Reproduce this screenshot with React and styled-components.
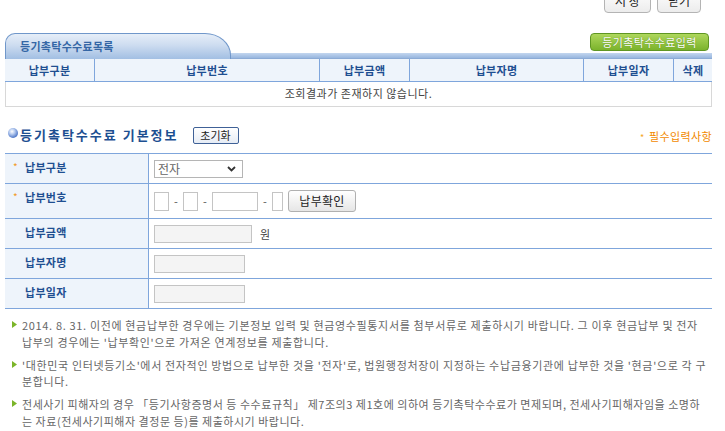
import React from "react";
import styled, { createGlobalStyle } from "styled-components";

const Global = createGlobalStyle`
  html, body { margin: 0; padding: 0; background: #fff; }
  body {
    font-family: "Noto Sans CJK KR", "Noto Sans", sans-serif;
    font-size: 11px;
    color: #333;
    overflow: hidden;
  }
  * { box-sizing: border-box; }
`;

const FONT = `"Noto Sans CJK KR", "Noto Sans", sans-serif`;
const BLUE_LINE = "#7fa6dc";
const LABEL_BLUE = "#1f4f91";
const HEAD_BG = "#eef4fb";

const Page = styled.div`
  width: 725px;
  padding: 0 13px 0 5px;
`;

const TopBar = styled.div`
  display: flex;
  justify-content: flex-end;
  gap: 6px;
  margin-top: -11px;
  padding-right: 11px;
`;

const TopButton = styled.button`
  width: ${(p) => p.$w}px;
  height: 24px;
  padding: 0;
  border: 1px solid #b4b4b4;
  border-radius: 4px;
  background: linear-gradient(#ffffff, #ececec);
  font: 12px/22px ${FONT};
  color: #222;
`;

const ListHead = styled.div`
  margin-top: 20px;
  height: 26px;
  display: flex;
  justify-content: space-between;
  align-items: flex-start;
  background:
    linear-gradient(#8cabd6, #8cabd6) left bottom / 100% 1px no-repeat,
    linear-gradient(#c3d6ef, #8fb0db) left bottom / 100% 6px no-repeat;
`;

const Tab = styled.div`
  width: 226px;
  height: 26px;
  padding-left: 14px;
  border: 1px solid #7097ca;
  border-bottom: none;
  border-radius: 10px 26px 0 0 / 10px 22px 0 0;
  background: linear-gradient(#e6eef8, #cddcf0 45%, #a2bfe3);
  font: bold 11px/25px ${FONT};
  letter-spacing: 0.3px;
  color: #3466a5;
`;

const GreenButton = styled.button`
  width: 119px;
  height: 18px;
  margin-right: 3px;
  padding: 0;
  border: 1px solid #5f9623;
  border-radius: 4px;
  background: linear-gradient(#aed75c, #7bb32c);
  color: #fff;
  font: 11px/16px ${FONT};
  letter-spacing: 0.4px;
  text-shadow: 0 0 1px #4d7d16;
`;

const HeadRow = styled.div`
  display: grid;
  grid-template-columns: 90px 225px 90px 174px 90px 1fr;
  background: ${HEAD_BG};
  border-bottom: 1px solid ${BLUE_LINE};
`;

const HeadCell = styled.div`
  height: 22px;
  line-height: 22px;
  text-align: center;
  font-weight: bold;
  font-size: 11px;
  letter-spacing: 0.3px;
  color: ${LABEL_BLUE};
  border-right: ${(p) => (p.$last ? "none" : `1px solid ${BLUE_LINE}`)};
`;

const EmptyRow = styled.div`
  height: 25px;
  line-height: 23px;
  text-align: center;
  color: #444;
  letter-spacing: 0.5px;
  border: 1px solid #d8d8d8;
  border-top: none;
`;

const SectionHead = styled.div`
  margin-top: 17px;
  height: 22px;
  display: flex;
  align-items: center;
`;

const Marker = styled.span`
  width: 10px;
  height: 10px;
  margin: -4px 0 0 3px;
  border-radius: 50%;
  background: radial-gradient(circle at 40% 35%, #ffffff 0, #b9cdf0 30%, #3d68c0 80%);
`;

const Title = styled.h2`
  margin: 0 0 0 2px;
  font: bold 13px/22px ${FONT};
  letter-spacing: 2px;
  color: #1d4f91;
`;

const ResetButton = styled.button`
  width: 46px;
  height: 17px;
  margin-left: 14px;
  padding: 0;
  border: 1px solid #3f6197;
  border-radius: 2px;
  background: linear-gradient(#ffffff, #e6ecf5);
  font: 11px/15px ${FONT};
  color: #222;
`;

const Required = styled.span`
  margin-left: auto;
  margin-top: 4px;
  font: 11px/14px ${FONT};
  letter-spacing: 0.4px;
  color: #f28a00;
`;

const Star = styled.span`
  display: inline-block;
  width: ${(p) => p.$w || 9}px;
  font-size: 9px;
  color: #f5a623;
`;

const Form = styled.div`
  margin-top: 7px;
  border-top: 1px solid ${BLUE_LINE};
`;

const FormRow = styled.div`
  display: grid;
  grid-template-columns: 144px 1fr;
  height: ${(p) => p.$h}px;
  border-bottom: 1px solid ${BLUE_LINE};
`;

const Label = styled.div`
  display: flex;
  padding: 6px 0 0 8px;
  background: ${HEAD_BG};
  border-right: 1px solid ${BLUE_LINE};
  font: bold 11px/14px ${FONT};
  letter-spacing: 0.3px;
  color: ${LABEL_BLUE};
`;

const LabelStar = styled.span`
  width: 12px;
  color: #f29b1e;
  font-size: 10px;
  font-weight: normal;
`;

const Value = styled.div`
  display: flex;
  align-items: center;
  padding-left: 5px;
  color: #333;
`;

const SelectBox = styled.div`
  width: 89px;
  height: 18px;
  display: flex;
  align-items: center;
  justify-content: space-between;
  padding: 0 6px 0 3px;
  border: 1px solid #b5b5b5;
  font: 12px/16px ${FONT};
  color: #666;
`;

const Box = styled.span`
  width: ${(p) => p.$w}px;
  height: ${(p) => p.$h || 19}px;
  border: 1px solid #c4c4c4;
  background: ${(p) => (p.$gray ? "#f4f4f4" : "#fff")};
`;

const Dash = styled.span`
  width: 14px;
  text-align: center;
  color: #555;
  font-size: 11px;
`;

const CheckButton = styled.button`
  width: 68px;
  height: 22px;
  margin-left: 5px;
  padding: 0;
  border: 1px solid #b0b0b0;
  border-radius: 3px;
  background: linear-gradient(#ffffff, #e6e6e6);
  font: 12px/20px ${FONT};
  letter-spacing: 0.3px;
  color: #222;
`;

const Unit = styled.span`
  margin-left: 8px;
  color: #444;
  font-size: 11px;
`;

const Notes = styled.div`
  padding: 8px 0 0 7px;
`;

const Note = styled.div`
  display: flex;
  margin-bottom: 6.5px;
`;

const Bullet = styled.span`
  flex: none;
  display: flex;
  align-items: flex-start;
  width: 10px;
  height: 16px;
  padding-top: 4px;
`;

const NoteText = styled.p`
  margin: 0;
  font: 11px/16.5px ${FONT};
  letter-spacing: ${(p) => p.$ls || 0.66}px;
  color: #666;
  white-space: nowrap;
`;

const Arrow = () => (
  <svg width="5" height="7" viewBox="0 0 5 7" style={{ display: "block" }}>
    <path d="M0 0 L5 3.5 L0 7 Z" fill="#7bb52a" />
  </svg>
);

const Chevron = () => (
  <svg width="9" height="6" viewBox="0 0 9 6">
    <path d="M1 1 L4.5 4.5 L8 1" fill="none" stroke="#333" strokeWidth="1.8" />
  </svg>
);

const heads = ["납부구분", "납부번호", "납부금액", "납부자명", "납부일자", "삭제"];

export default function App() {
  return (
    <>
      <Global />
      <Page>
        <TopBar>
          <TopButton $w={47}>저 장</TopButton>
          <TopButton $w={44}>닫기</TopButton>
        </TopBar>

        <ListHead>
          <Tab>등기촉탁수수료목록</Tab>
          <GreenButton>등기촉탁수수료입력</GreenButton>
        </ListHead>
        <HeadRow>
          {heads.map((h, i) => (
            <HeadCell key={h} $last={i === heads.length - 1}>
              {h}
            </HeadCell>
          ))}
        </HeadRow>
        <EmptyRow>조회결과가 존재하지 않습니다.</EmptyRow>

        <SectionHead>
          <Marker />
          <Title>등기촉탁수수료 기본정보</Title>
          <ResetButton>초기화</ResetButton>
          <Required>
            <Star $w={9}>*</Star>필수입력사항
          </Required>
        </SectionHead>

        <Form>
          <FormRow $h={30}>
            <Label>
              <LabelStar>*</LabelStar>납부구분
            </Label>
            <Value>
              <SelectBox>
                <span>전자</span>
                <Chevron />
              </SelectBox>
            </Value>
          </FormRow>
          <FormRow $h={35}>
            <Label>
              <LabelStar>*</LabelStar>납부번호
            </Label>
            <Value>
              <Box $w={15} />
              <Dash>-</Dash>
              <Box $w={15} />
              <Dash>-</Dash>
              <Box $w={46} />
              <Dash>-</Dash>
              <Box $w={11} />
              <CheckButton>납부확인</CheckButton>
            </Value>
          </FormRow>
          <FormRow $h={30}>
            <Label>
              <LabelStar />납부금액
            </Label>
            <Value>
              <Box $w={98} $h={18} $gray />
              <Unit>원</Unit>
            </Value>
          </FormRow>
          <FormRow $h={30}>
            <Label>
              <LabelStar />납부자명
            </Label>
            <Value>
              <Box $w={91} $h={18} $gray />
            </Value>
          </FormRow>
          <FormRow $h={30}>
            <Label>
              <LabelStar />납부일자
            </Label>
            <Value>
              <Box $w={91} $h={18} $gray />
            </Value>
          </FormRow>
        </Form>

        <Notes>
          <Note>
            <Bullet><Arrow /></Bullet>
            <NoteText>
              2014. 8. 31. 이전에 현금납부한 경우에는 기본정보 입력 및 현금영수필통지서를 첨부서류로 제출하시기 바랍니다. 그 이후 현금납부 및 전자
              <br />
              납부의 경우에는 '납부확인'으로 가져온 연계정보를 제출합니다.
            </NoteText>
          </Note>
          <Note>
            <Bullet><Arrow /></Bullet>
            <NoteText>
              '대한민국 인터넷등기소'에서 전자적인 방법으로 납부한 것을 '전자'로, 법원행정처장이 지정하는 수납금융기관에 납부한 것을 '현금'으로 각 구
              <br />
              분합니다.
            </NoteText>
          </Note>
          <Note>
            <Bullet><Arrow /></Bullet>
            <NoteText $ls={0.52}>
              전세사기 피해자의 경우 「등기사항증명서 등 수수료규칙」 제7조의3 제1호에 의하여 등기촉탁수수료가 면제되며, 전세사기피해자임을 소명하
              <br />
              는 자료(전세사기피해자 결정문 등)를 제출하시기 바랍니다.
            </NoteText>
          </Note>
        </Notes>
      </Page>
    </>
  );
}
